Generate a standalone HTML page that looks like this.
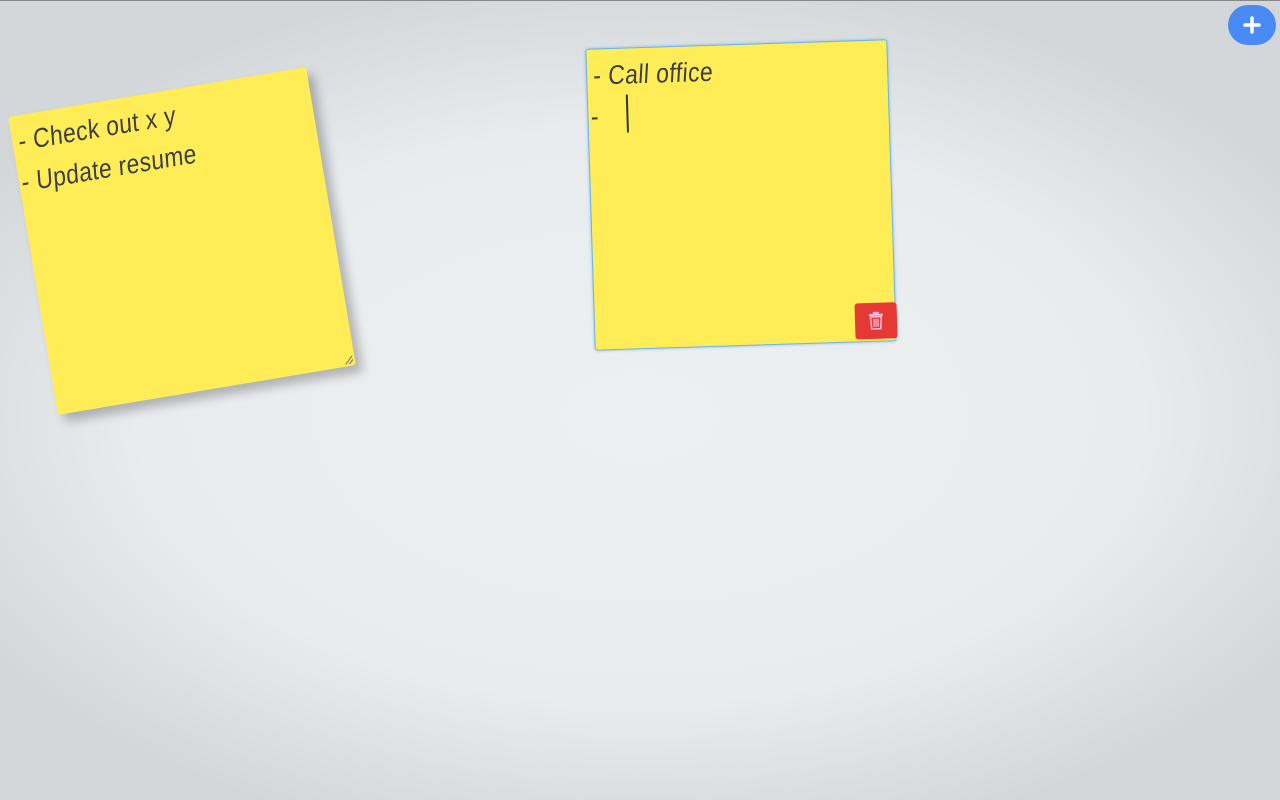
<!DOCTYPE html>
<html><head><meta charset="utf-8"><style>
html,body{margin:0;padding:0;width:1280px;height:800px;overflow:hidden}
body{background:radial-gradient(ellipse 60% 55% at 50% 52%,#edf0f1 0%,#e9ecee 65%,#d3d7da 100%);border-top:1px solid #888;box-sizing:border-box;position:relative;font-family:"Liberation Sans Narrow","Liberation Sans",sans-serif}
.note{position:absolute;width:302px;height:302px;background:#ffed57;border-radius:3px;box-sizing:border-box;color:#3d3d48;font-size:27px;line-height:41px;padding:6px 8px;transform-origin:center}
.n1{left:31px;top:89px;transform:rotate(-9.5deg);box-shadow:6px 8px 10px rgba(0,0,0,.25)}
.n2{left:590px;top:43px;transform:rotate(-1.8deg);border:1px solid #6fb3ea;box-shadow:0 0 3px rgba(80,160,230,.6)}
.txt{transform:scaleX(.85) skewX(-6deg);transform-origin:left top;white-space:pre;letter-spacing:.5px}
.del{position:absolute;right:-2px;bottom:2px;width:42px;height:36px;background:#e53935;border-radius:3px;display:flex;align-items:center;justify-content:center}
.grip{position:absolute;right:2px;bottom:2px;width:8px;height:8px;background:linear-gradient(135deg,transparent 45%,#777 45%,#777 55%,transparent 55%,transparent 70%,#777 70%,#777 80%,transparent 80%)}
.cursor{position:absolute;left:38px;top:46px;width:1.5px;height:38px;background:#333}
.add{position:absolute;left:1228px;top:4px;width:48px;height:40px;border-radius:20px;background:#4a8af4;display:flex;align-items:center;justify-content:center}
</style></head><body>
<div class="note n1"><div class="txt">- Check out x y
- Update resume</div><div class="grip"></div></div>
<div class="note n2"><div class="txt">- Call office
- </div><div class="cursor"></div>
<div class="del"><svg width="16" height="20" viewBox="0 0 16 20"><rect x="1" y="3" width="14" height="2" fill="#fbd"/><rect x="5" y="1" width="6" height="2" fill="#fbd"/><path d="M2.5 6h11l-1 12h-9z" fill="none" stroke="#fbd" stroke-width="1.5"/><path d="M6 8v8M8 8v8M10 8v8" stroke="#fbd" stroke-width="1.2"/></svg></div></div>
<div class="add"><svg width="18" height="18" viewBox="0 0 18 18"><path d="M9 2v14M2 9h14" stroke="#fff" stroke-width="3.5" stroke-linecap="round"/></svg></div>
</body></html>
